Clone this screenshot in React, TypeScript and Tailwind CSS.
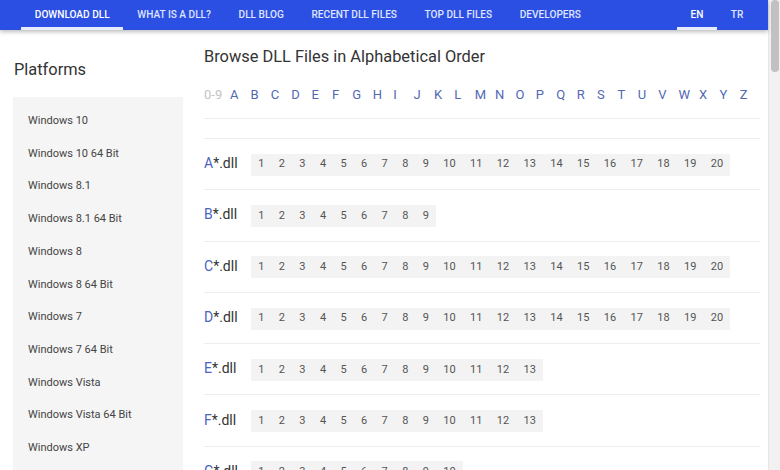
import React from "react";

const navItems = [
  "DOWNLOAD DLL",
  "WHAT IS A DLL?",
  "DLL BLOG",
  "RECENT DLL FILES",
  "TOP DLL FILES",
  "DEVELOPERS",
];

const platforms = [
  "Windows 10",
  "Windows 10 64 Bit",
  "Windows 8.1",
  "Windows 8.1 64 Bit",
  "Windows 8",
  "Windows 8 64 Bit",
  "Windows 7",
  "Windows 7 64 Bit",
  "Windows Vista",
  "Windows Vista 64 Bit",
  "Windows XP",
  "Windows 2000",
];

const letters = "ABCDEFGHIJKLMNOPQRSTUVWXYZ".split("");

const rows = [
  { letter: "A", pages: 20 },
  { letter: "B", pages: 9 },
  { letter: "C", pages: 20 },
  { letter: "D", pages: 20 },
  { letter: "E", pages: 13 },
  { letter: "F", pages: 13 },
  { letter: "G", pages: 10 },
];

const App = () => {
  return (
    <div
      className="flex h-[470px] w-[780px] overflow-hidden bg-white"
      style={{ fontFamily: "Roboto, 'Liberation Sans', sans-serif" }}
    >
      <div className="flex w-[768px] flex-col">
        {/* top nav */}
        <nav className="relative z-10 flex h-[30px] shrink-0 items-stretch bg-[#2c4fe3] pl-[21px] shadow-[0_2px_4px_rgba(0,0,0,0.25)]">
          {navItems.map((item, i) => (
            <a
              key={item}
              className={`flex items-center border-b-[3px] px-[13.8px] pt-[3px] text-[10.1px] font-medium ${
                i === 0
                  ? "border-[#e8ecff] text-white"
                  : "border-transparent text-[#dfe5ff]"
              }`}
            >
              {item}
            </a>
          ))}
          <div className="ml-auto flex items-stretch pr-[11px]">
            <a className="flex w-[40px] items-center justify-center border-b-[3px] border-[#e8ecff] pt-[3px] text-[10.1px] font-medium text-white">
              EN
            </a>
            <a className="flex w-[40px] items-center justify-center border-b-[3px] border-transparent pt-[3px] text-[10.1px] font-medium text-[#dfe5ff]">
              TR
            </a>
          </div>
        </nav>

        <div className="flex gap-[21px] pl-[13px] pr-[13px]">
          {/* sidebar */}
          <aside className="w-[170px] shrink-0">
            <h2 className="mt-[29px] h-[22px] pl-[1px] text-[16.4px] leading-[22px] text-[#333]">
              Platforms
            </h2>
            <ul className="mt-[16px] bg-[#f5f5f5] pt-[8px]">
              {platforms.map((p) => (
                <li
                  key={p}
                  className="flex h-[32.7px] items-center pl-[15px] text-[11px] text-[#444]"
                >
                  {p}
                </li>
              ))}
            </ul>
          </aside>

          {/* main */}
          <main className="flex-1">
            <h1 className="mt-[16px] h-[22px] text-[16.4px] leading-[22px] text-[#333]">
              Browse DLL Files in Alphabetical Order
            </h1>
            <div className="mt-[19px] flex h-[16px] items-center text-[13px] leading-[16px]">
              <span className="w-[26px] text-[#c4c4c4]">0-9</span>
              {letters.map((l) => (
                <a key={l} className="w-[20.4px] text-[#5168b4]">
                  {l}
                </a>
              ))}
            </div>
            <div className="mt-[15px] h-[21px] border-y border-[#eeeeee]" />
            {rows.map((r) => (
              <div
                key={r.letter}
                className="flex h-[51.3px] items-center border-b border-[#eeeeee] pb-[1px]"
              >
                <span className="w-[47px] text-[14px] text-[#333]">
                  <span className="text-[#4a64bd]">{r.letter}</span>*.dll
                </span>
                <div className="mt-[2px] flex bg-[#f3f3f3]">
                  {Array.from({ length: r.pages }, (_, i) => i + 1).map((n) => (
                    <a
                      key={n}
                      className="flex h-[22px] items-center px-[7.2px] text-[11px] text-[#555]"
                    >
                      {n}
                    </a>
                  ))}
                </div>
              </div>
            ))}
          </main>
        </div>
      </div>

      {/* scrollbar */}
      <div className="flex w-[12px] shrink-0 justify-center border-l border-[#e6e6e6] bg-[#f1f1f1]">
        <div className="h-[72px] w-[8px] rounded-sm bg-[#c1c1c1]" />
      </div>
    </div>
  );
};

export default App;
